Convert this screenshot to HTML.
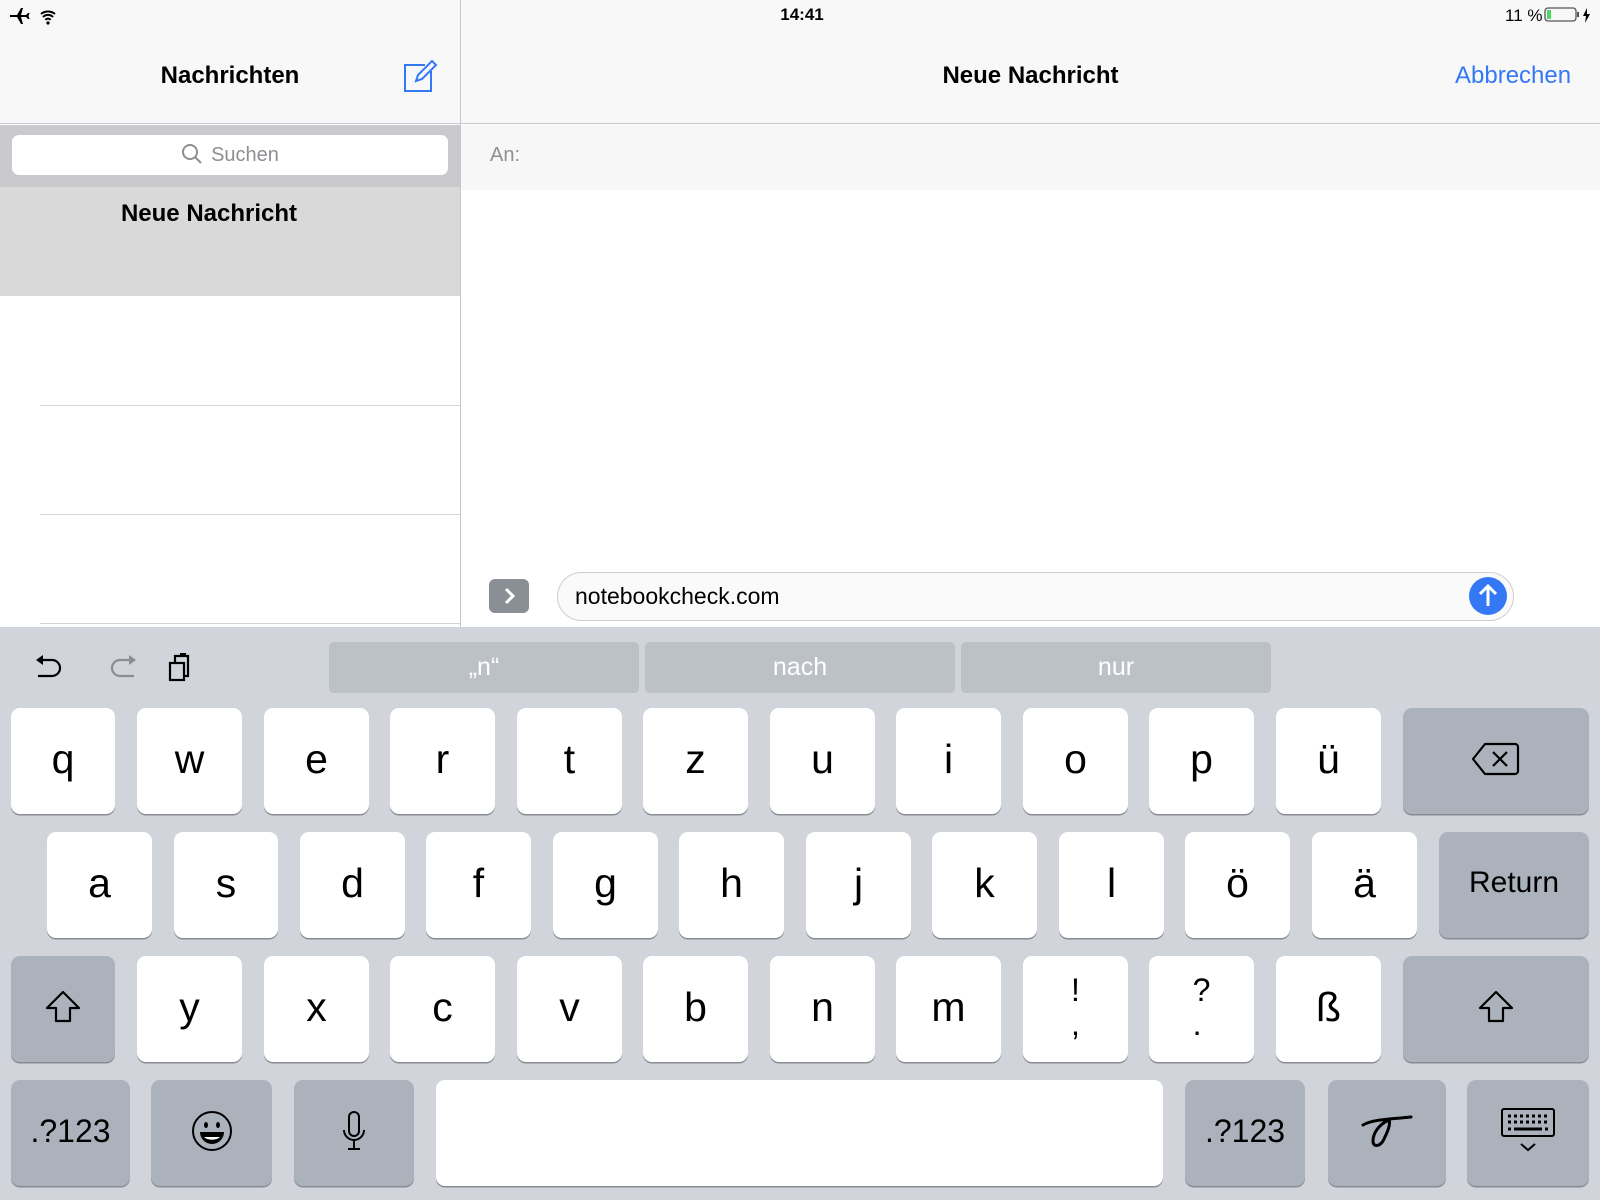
<!DOCTYPE html>
<html><head><meta charset="utf-8"><style>
*{margin:0;padding:0;box-sizing:border-box}
body{width:1600px;height:1200px;position:relative;overflow:hidden;background:#fff;font-family:"Liberation Sans",sans-serif;color:#000}
.a{position:absolute}
.k{position:absolute;background:#fff;border-radius:9px;box-shadow:0 1.5px 0 #888b90;display:flex;align-items:center;justify-content:center;font-size:41px;color:#000;padding-bottom:4px}
.s{background:#acb2bc}
.sg{position:absolute;top:642px;height:51px;width:310px;background:#bcc0c7;border-radius:5px;color:#fff;font-size:25px;display:flex;align-items:center;justify-content:center}
</style></head><body>
<!-- top bars -->
<div class="a" style="left:0;top:0;width:1600px;height:124px;background:#f8f8f8;border-bottom:1px solid #c8c7cc"></div>
<div class="a" style="left:460px;top:0;width:1px;height:627px;background:#c8c7cc"></div>
<svg class="a" style="left:8px;top:6px" width="50" height="20" viewBox="0 0 50 20"><path d="M2 9h7l4-7h2l-2 7h5l2-2h1.5l-1 3 1 3H20l-2-2h-5l2 7h-2l-4-7H2z" fill="#000"/><path d="M33 8a11 11 0 0 1 14 0M35 11a7 7 0 0 1 10 0M37.5 14a3 3 0 0 1 5 0" stroke="#000" stroke-width="2" fill="none"/><circle cx="40" cy="17" r="1.6"/></svg>
<div class="a" style="left:760px;top:5px;width:84px;text-align:center;font-size:17px;font-weight:bold">14:41</div>
<div class="a" style="left:1505px;top:6px;font-size:17px">11 %</div>
<svg class="a" style="left:1544px;top:6px" width="54" height="20" viewBox="0 0 54 20"><rect x="1" y="2" width="31" height="13" rx="3" fill="none" stroke="#555" stroke-width="1.3"/><rect x="3" y="4" width="4" height="9" fill="#4cd964"/><rect x="33" y="6" width="2" height="5" fill="#555"/><path d="M43 2l-4 8h3l-1 7 5-9h-3z" fill="#000"/></svg>
<div class="a" style="left:0;top:62px;width:460px;text-align:center;font-size:24px;font-weight:bold">Nachrichten</div>
<svg class="a" style="left:402px;top:57px" width="36" height="36" viewBox="0 0 36 36"><path d="M23 8H3v26h26V14" fill="none" stroke="#3478f6" stroke-width="2"/><path d="M14 24l2-6 14-14 4 4-14 14z" fill="none" stroke="#3478f6" stroke-width="2"/></svg>
<div class="a" style="left:461px;top:62px;width:1139px;text-align:center;font-size:24px;font-weight:bold">Neue Nachricht</div>
<div class="a" style="left:1455px;top:62px;font-size:24px;color:#3478f6">Abbrechen</div>
<!-- left panel -->
<div class="a" style="left:0;top:125px;width:460px;height:62px;background:#c9c9ce"></div>
<div class="a" style="left:12px;top:135px;width:436px;height:40px;background:#fff;border-radius:7px;color:#8e8e93;font-size:20px;text-align:center;line-height:40px"><svg width="22" height="22" viewBox="0 0 22 22" style="vertical-align:-4px;margin-right:8px"><circle cx="9" cy="9" r="7" fill="none" stroke="#8e8e93" stroke-width="2"/><path d="M14 14l6 6" stroke="#8e8e93" stroke-width="2"/></svg>Suchen</div>
<div class="a" style="left:0;top:187px;width:460px;height:109px;background:#d9d9d9"></div>
<div class="a" style="left:0;top:200px;width:418px;text-align:center;font-size:24px;font-weight:bold">Neue Nachricht</div>
<div class="a" style="left:40px;top:405px;width:420px;height:1px;background:#d4d4d6"></div>
<div class="a" style="left:40px;top:514px;width:420px;height:1px;background:#d4d4d6"></div>
<div class="a" style="left:40px;top:623px;width:420px;height:1px;background:#d4d4d6"></div>
<!-- right -->
<div class="a" style="left:461px;top:125px;width:1139px;height:65px;background:#f7f7f7"></div>
<div class="a" style="left:490px;top:144px;font-size:20px;color:#8e8e93">An:</div>
<div class="a" style="left:489px;top:579px;width:40px;height:34px;background:#8a8e95;border-radius:6px"><svg width="40" height="34"><path d="M17 10l7 7-7 7" stroke="#fff" stroke-width="3" fill="none"/></svg></div>
<div class="a" style="left:557px;top:572px;width:957px;height:49px;border:1.5px solid #cfcfd3;border-radius:25px;background:#fafafa;font-size:23px;line-height:46px;padding-left:17px">notebookcheck.com</div>
<svg class="a" style="left:1469px;top:577px" width="38" height="38"><circle cx="19" cy="19" r="19" fill="#3478f6"/><path d="M19 29V10M11 17l8-8 8 8" stroke="#fff" stroke-width="3" fill="none"/></svg>
<!-- keyboard -->
<div class="a" style="left:0;top:627px;width:1600px;height:573px;background:#d1d5db"></div>
<svg class="a" style="left:30px;top:650px" width="180" height="36" viewBox="0 0 180 36"><path d="M8 10h14a8 8 0 0 1 0 16H8" stroke="#000" stroke-width="2.2" fill="none"/><path d="M6 10l7-5v10z" fill="#000"/><path d="M104 10H90a8 8 0 0 0 0 16h14" stroke="#8a8d93" stroke-width="2.2" fill="none"/><path d="M106 10l-7-5v10z" fill="#8a8d93"/><rect x="140" y="13" width="14" height="17" fill="none" stroke="#000" stroke-width="2.2"/><path d="M145 12V6h13v20h-3" fill="none" stroke="#000" stroke-width="2.2"/><rect x="150" y="3" width="6" height="3" fill="#000"/></svg>
<div class="sg" style="left:329px">„n“</div>
<div class="sg" style="left:645px">nach</div>
<div class="sg" style="left:961px">nur</div>
<!-- row1 -->
<div class="k" style="left:11px;top:708px;width:104px;height:106px">q</div>
<div class="k" style="left:137px;top:708px;width:105px;height:106px">w</div>
<div class="k" style="left:264px;top:708px;width:105px;height:106px">e</div>
<div class="k" style="left:390px;top:708px;width:105px;height:106px">r</div>
<div class="k" style="left:517px;top:708px;width:105px;height:106px">t</div>
<div class="k" style="left:643px;top:708px;width:105px;height:106px">z</div>
<div class="k" style="left:770px;top:708px;width:105px;height:106px">u</div>
<div class="k" style="left:896px;top:708px;width:105px;height:106px">i</div>
<div class="k" style="left:1023px;top:708px;width:105px;height:106px">o</div>
<div class="k" style="left:1149px;top:708px;width:105px;height:106px">p</div>
<div class="k" style="left:1276px;top:708px;width:105px;height:106px">ü</div>
<div class="k s" style="left:1403px;top:708px;width:186px;height:106px"><svg width="50" height="36" viewBox="0 0 50 36"><path d="M14 3h30a3 3 0 0 1 3 3v24a3 3 0 0 1-3 3H14L2 18z" fill="none" stroke="#000" stroke-width="2.2" stroke-linejoin="round"/><path d="M22 11l14 14M36 11L22 25" stroke="#000" stroke-width="2.2"/></svg></div>
<!-- row2 -->
<div class="k" style="left:47px;top:832px;width:105px;height:106px">a</div>
<div class="k" style="left:174px;top:832px;width:104px;height:106px">s</div>
<div class="k" style="left:300px;top:832px;width:105px;height:106px">d</div>
<div class="k" style="left:426px;top:832px;width:105px;height:106px">f</div>
<div class="k" style="left:553px;top:832px;width:105px;height:106px">g</div>
<div class="k" style="left:679px;top:832px;width:105px;height:106px">h</div>
<div class="k" style="left:806px;top:832px;width:105px;height:106px">j</div>
<div class="k" style="left:932px;top:832px;width:105px;height:106px">k</div>
<div class="k" style="left:1059px;top:832px;width:105px;height:106px">l</div>
<div class="k" style="left:1185px;top:832px;width:105px;height:106px">ö</div>
<div class="k" style="left:1312px;top:832px;width:105px;height:106px">ä</div>
<div class="k s" style="left:1439px;top:832px;width:150px;height:106px;font-size:30px">Return</div>
<!-- row3 -->
<div class="k s" style="left:11px;top:956px;width:104px;height:106px"><svg width="40" height="36" viewBox="0 0 40 36"><path d="M20 3L4 19h9v13h14V19h9z" fill="none" stroke="#000" stroke-width="2.2" stroke-linejoin="round"/></svg></div>
<div class="k" style="left:137px;top:956px;width:105px;height:106px">y</div>
<div class="k" style="left:264px;top:956px;width:105px;height:106px">x</div>
<div class="k" style="left:390px;top:956px;width:105px;height:106px">c</div>
<div class="k" style="left:517px;top:956px;width:105px;height:106px">v</div>
<div class="k" style="left:643px;top:956px;width:105px;height:106px">b</div>
<div class="k" style="left:770px;top:956px;width:105px;height:106px">n</div>
<div class="k" style="left:896px;top:956px;width:105px;height:106px">m</div>
<div class="k" style="left:1023px;top:956px;width:105px;height:106px;flex-direction:column;font-size:32px;line-height:34px">!<br>,</div>
<div class="k" style="left:1149px;top:956px;width:105px;height:106px;flex-direction:column;font-size:32px;line-height:34px">?<br>.</div>
<div class="k" style="left:1276px;top:956px;width:105px;height:106px">ß</div>
<div class="k s" style="left:1403px;top:956px;width:186px;height:106px"><svg width="40" height="36" viewBox="0 0 40 36"><path d="M20 3L4 19h9v13h14V19h9z" fill="none" stroke="#000" stroke-width="2.2" stroke-linejoin="round"/></svg></div>
<!-- row4 -->
<div class="k s" style="left:11px;top:1080px;width:119px;height:106px;font-size:32px">.?123</div>
<div class="k s" style="left:151px;top:1080px;width:121px;height:106px"><svg width="44" height="44" viewBox="0 0 44 44"><circle cx="22" cy="22" r="19" fill="none" stroke="#000" stroke-width="2"/><ellipse cx="16" cy="16" rx="2" ry="3"/><ellipse cx="28" cy="16" rx="2" ry="3"/><path d="M10 23h24a12 12 0 0 1-24 0z"/><path d="M14 28h16a9 5 0 0 1-16 0z" fill="#fff"/></svg></div>
<div class="k s" style="left:294px;top:1080px;width:120px;height:106px"><svg width="30" height="42" viewBox="0 0 30 42"><rect x="10" y="2" width="10" height="24" rx="5" fill="none" stroke="#000" stroke-width="2"/><path d="M5 20a10 10 0 0 0 20 0M15 31v8M9 39h12" stroke="#000" stroke-width="2" fill="none"/></svg></div>
<div class="k" style="left:436px;top:1080px;width:727px;height:106px"></div>
<div class="k s" style="left:1185px;top:1080px;width:120px;height:106px;font-size:32px">.?123</div>
<div class="k s" style="left:1328px;top:1080px;width:118px;height:106px"><svg width="56" height="40" viewBox="0 0 56 40"><path d="M4 14c10-6 30-6 48-8M28 10c-8 4-14 12-14 20 0 6 6 6 10 0 4-8 8-16 6-22" stroke="#000" stroke-width="3" fill="none" stroke-linecap="round"/></svg></div>
<div class="k s" style="left:1467px;top:1080px;width:122px;height:106px"><svg width="56" height="48" viewBox="0 0 56 48"><rect x="2" y="2" width="52" height="27" rx="2" fill="none" stroke="#000" stroke-width="2"/><path d="M8 9h40M8 15h40" stroke="#000" stroke-width="3" stroke-dasharray="3 3"/><path d="M8 22h3M14 22h28M45 22h3" stroke="#000" stroke-width="3"/><path d="M21 37l7 6 7-6" stroke="#000" stroke-width="2" fill="none"/></svg></div>
</body></html>
